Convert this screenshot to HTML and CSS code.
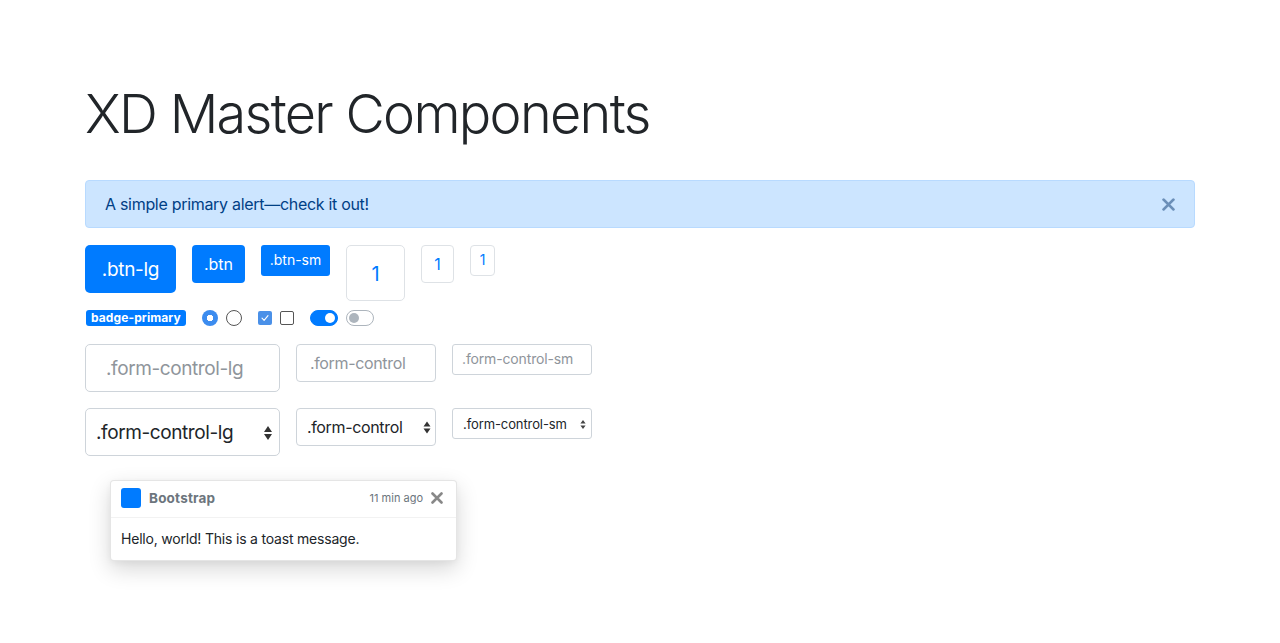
FILE: index.html
```html
<!DOCTYPE html>
<html>
<head>
<meta charset="utf-8">
<link rel="stylesheet" href="styles.css">
</head>
<body>
<div class="container">
  <h1 class="title">XD Master Components</h1>
  <div class="alert">
    <span>A simple primary alert—check it out!</span>
    <svg class="alert-close" width="13" height="13" viewBox="0 0 12 12"><path d="M1.5 1.5L10.5 10.5M10.5 1.5L1.5 10.5" stroke="currentColor" stroke-width="2.6" stroke-linecap="round"/></svg>
  </div>
  <div class="row row-buttons">
    <button class="btn btn-lg">.btn-lg</button>
    <button class="btn btn-md">.btn</button>
    <button class="btn btn-sm">.btn-sm</button>
    <div class="page page-lg">1</div>
    <div class="page page-md">1</div>
    <div class="page page-sm">1</div>
  </div>
  <div class="row row-controls">
    <span class="badge">badge-primary</span>
    <span class="group">
      <span class="radio radio-on"></span>
      <span class="radio"></span>
    </span>
    <span class="group">
      <span class="check check-on"><svg width="10" height="10" viewBox="0 0 10 10"><path d="M2 5.2L4.1 7.3L8 2.6" fill="none" stroke="#fff" stroke-width="1.1" stroke-linecap="round" stroke-linejoin="round"/></svg></span>
      <span class="check"></span>
    </span>
    <span class="group">
      <span class="switch switch-on"><span class="knob"></span></span>
      <span class="switch"><span class="knob"></span></span>
    </span>
  </div>
  <div class="row row-inputs">
    <div class="input input-lg">.form-control-lg</div>
    <div class="input input-md">.form-control</div>
    <div class="input input-sm">.form-control-sm</div>
  </div>
  <div class="row row-selects">
    <div class="select select-lg"><span>.form-control-lg</span><svg width="10" height="18" viewBox="0 0 10 18"><path d="M5 2L9 8H1Z M5 16L1 10H9Z" fill="#333"/></svg></div>
    <div class="select select-md"><span>.form-control</span><svg width="8" height="15" viewBox="0 0 8 15"><path d="M4 1.5L7.5 6.5H0.5Z M4 13.5L0.5 8.5H7.5Z" fill="#333"/></svg></div>
    <div class="select select-sm"><span>.form-control-sm</span><svg width="6" height="11" viewBox="0 0 6 11"><path d="M3 1L5.6 4.6H0.4Z M3 10L0.4 6.4H5.6Z" fill="#444"/></svg></div>
  </div>
  <div class="toast">
    <div class="toast-header">
      <span class="toast-icon"></span>
      <strong class="toast-title">Bootstrap</strong>
      <small class="toast-time">11 min ago</small>
      <svg class="toast-close" width="12" height="12" viewBox="0 0 12 12"><path d="M1.5 1.5L10.5 10.5M10.5 1.5L1.5 10.5" stroke="currentColor" stroke-width="2.6" stroke-linecap="round"/></svg>
    </div>
    <div class="toast-body">Hello, world! This is a toast message.</div>
  </div>
</div>
</body>
</html>
```
FILE: styles.css
```css
* { box-sizing: border-box; }
html, body { margin: 0; padding: 0; background: #fff; }
body {
  font-family: Inter, "Noto Sans", "Liberation Sans", sans-serif;
  color: #212529;
  font-size: 16px;
}
.container {
  width: 1110px;
  margin: 0 auto;
  padding-top: 80px;
  padding-bottom: 40px;
}
.title {
  margin: 0 0 33px;
  font-size: 54px;
  font-weight: 300;
  line-height: 67px;
  letter-spacing: -1.7px;
  color: #212529;
}
.alert {
  display: flex;
  align-items: center;
  justify-content: space-between;
  height: 48px;
  padding: 0 19px 0 19px;
  background: #cce5ff;
  border: 1px solid #b8daff;
  border-radius: 4px;
  color: #004085;
  font-size: 16px;
  letter-spacing: -0.3px;
  margin-bottom: 17px;
}
.alert-close { color: #6b8fb8; }
.row {
  display: flex;
  align-items: flex-start;
  gap: 16px;
}
.btn {
  border: 0;
  background: #007bff;
  color: #fff;
  font-family: inherit;
  padding: 0;
}
.btn-lg { width: 91px; height: 48px; font-size: 19px; letter-spacing: -0.3px; border-radius: 5px; }
.btn-md { width: 53px; height: 38px; font-size: 16px; border-radius: 4px; }
.btn-sm { width: 69px; height: 31px; font-size: 14px; border-radius: 3px; padding-bottom: 2px; }
.page {
  border: 1px solid #dee2e6;
  border-radius: 4px;
  color: #007bff;
  display: flex;
  align-items: center;
  justify-content: center;
}
.page-lg { width: 59px; height: 56px; font-size: 20px; padding-top: 2px; border-radius: 5px; }
.page-md { width: 33px; height: 38px; font-size: 16px; }
.page-sm { width: 25px; height: 31px; font-size: 14px; padding-bottom: 2px; }
.row-buttons { margin-bottom: 8px; }
.row-controls { align-items: center; gap: 16px; margin-bottom: 17px; height: 18px; }
.badge {
  display: inline-block;
  background: #007bff;
  color: #fff;
  font-size: 12px;
  font-weight: 700;
  line-height: 16px;
  padding: 0 5px;
  letter-spacing: 0.1px;
  border-radius: 3px;
  margin-left: 1px;
}
.group { display: flex; align-items: center; gap: 8px; }
.radio {
  flex-shrink: 0;
  width: 16px; height: 16px;
  border-radius: 50%;
  border: 1px solid #555;
  background: #fff;
}
.radio-on {
  border: 0;
  background: radial-gradient(circle, #fff 0 3px, #3c8cef 3.5px);
}
.check {
  flex-shrink: 0;
  width: 14px; height: 14px;
  border: 1px solid #555;
  border-radius: 2px;
  background: #fff;
  display: flex; align-items: center; justify-content: center;
}
.check-on { border: 0; background: #4a90e8; }
.switch {
  flex-shrink: 0;
  width: 28px; height: 16px;
  border-radius: 8px;
  border: 1px solid #adb5bd;
  background: #fff;
  position: relative;
}
.switch .knob {
  position: absolute;
  top: 2px; left: 2px;
  width: 10px; height: 10px;
  border-radius: 50%;
  background: #adb5bd;
}
.switch-on { background: #007bff; border-color: #007bff; }
.switch-on .knob { left: auto; right: 2px; background: #fff; }
.input {
  border: 1px solid #ced4da;
  border-radius: 4px;
  color: #8f959b;
  display: flex; align-items: center;
}
.input-lg { width: 195px; height: 48px; font-size: 19px; letter-spacing: -0.4px; padding-left: 20px; border-radius: 5px; }
.input-md { width: 140px; height: 38px; font-size: 16px; letter-spacing: -0.35px; padding-left: 13px; }
.input-sm { width: 140px; height: 31px; font-size: 14px; letter-spacing: -0.15px; padding-left: 9px; padding-bottom: 2px; border-radius: 3px; }
.row-inputs { margin-bottom: 16px; }
.select {
  border: 1px solid #ced4da;
  border-radius: 4px;
  color: #212529;
  display: flex; align-items: center; justify-content: space-between;
}
.select-lg { width: 195px; height: 48px; font-size: 19px; letter-spacing: -0.4px; padding: 0 6px 0 10px; border-radius: 5px; }
.select-lg svg { margin-top: 2px; }
.select-md { width: 140px; height: 38px; font-size: 16px; letter-spacing: -0.35px; padding: 0 4px 0 10px; }
.select-sm { width: 140px; height: 31px; font-size: 13px; letter-spacing: -0.1px; padding: 1px 5px 0 10px; border-radius: 3px; }
.toast {
  width: 347px;
  margin: 24px 0 0 25px;
  background: #fff;
  border: 1px solid rgba(0,0,0,0.1);
  border-radius: 4px;
  box-shadow: 0 8px 22px rgba(0,0,0,0.16), 0 2px 6px rgba(0,0,0,0.04);
}
.toast-header {
  display: flex;
  align-items: center;
  height: 37px;
  padding: 0 13px 2px 10px;
  border-bottom: 1px solid rgba(0,0,0,0.05);
  color: #6c757d;
}
.toast-icon {
  width: 20px; height: 20px;
  background: #007bff;
  border-radius: 3px;
  margin-right: 8px;
}
.toast-title { font-size: 13.5px; font-weight: 700; letter-spacing: 0.2px; }
.toast-time { margin-left: auto; font-size: 11px; margin-right: 8px; }
.toast-close { color: #888; }
.toast-body {
  padding: 11px 10px 11px;
  font-size: 14px;
  line-height: 20px;
  letter-spacing: -0.2px;
  color: #212529;
}
```
